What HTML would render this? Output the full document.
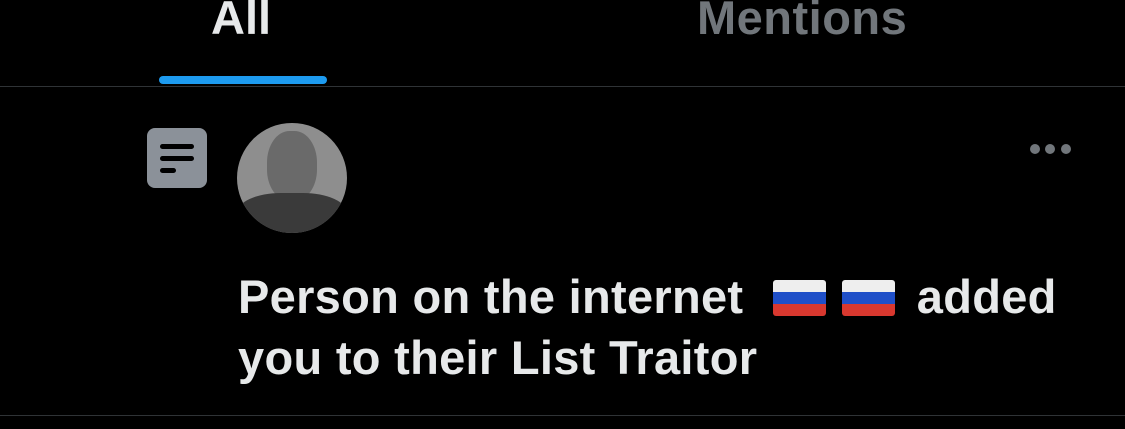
<!DOCTYPE html>
<html><head><style>
body{margin:0;width:1125px;height:429px;background:#000;overflow:hidden;position:relative;font-family:"Liberation Sans",sans-serif;font-weight:bold}
.a{position:absolute}
.f{display:inline-block;width:53px;height:36px;vertical-align:-3px;border-radius:3px;background:linear-gradient(#eee 0 33%,#1f4fc8 33% 66%,#d8382f 66%);margin:0 4px}
</style></head><body>
<div class="a" style="left:211px;top:-10px;font-size:47px;color:#e7e9ea">All</div>
<div class="a" style="left:697px;top:-10px;font-size:47px;letter-spacing:0.5px;color:#71767b">Mentions</div>
<div class="a" style="left:159px;top:76px;width:168px;height:8px;border-radius:4px;background:#1d9bf0"></div>
<div class="a" style="left:0;top:86px;width:1125px;height:1px;background:#2f3336"></div>
<div class="a" style="left:0;top:415px;width:1125px;height:1px;background:#2f3336"></div>
<div class="a" style="left:147px;top:128px;width:60px;height:60px;border-radius:8px;background:#8b9199"></div>
<div class="a" style="left:160px;top:144px;width:34px;height:5px;border-radius:3px;background:#000"></div>
<div class="a" style="left:160px;top:156px;width:34px;height:5px;border-radius:3px;background:#000"></div>
<div class="a" style="left:160px;top:168px;width:16px;height:5px;border-radius:3px;background:#000"></div>
<div class="a" style="left:237px;top:123px;width:110px;height:110px;border-radius:50%;overflow:hidden;background:#8e8e8e">
 <div class="a" style="left:30px;top:8px;width:50px;height:70px;border-radius:45%;background:#6a6a6a"></div>
 <div class="a" style="left:0;top:70px;width:110px;height:50px;border-radius:40% 40% 0 0;background:#3a3a3a"></div>
</div>
<div class="a" style="left:1030px;top:144px;width:10px;height:10px;border-radius:50%;background:#71767b"></div>
<div class="a" style="left:1045px;top:144px;width:10px;height:10px;border-radius:50%;background:#71767b"></div>
<div class="a" style="left:1061px;top:144px;width:10px;height:10px;border-radius:50%;background:#71767b"></div>
<div class="a" style="left:238px;top:266px;font-size:47px;line-height:61px;letter-spacing:0.3px;color:#e7e9ea;white-space:nowrap">Person on the internet<span class="f" style="margin-left:30px"></span><span class="f" style="margin-left:12px;margin-right:8px"></span> added<br>you to their List Traitor</div>
</body></html>
